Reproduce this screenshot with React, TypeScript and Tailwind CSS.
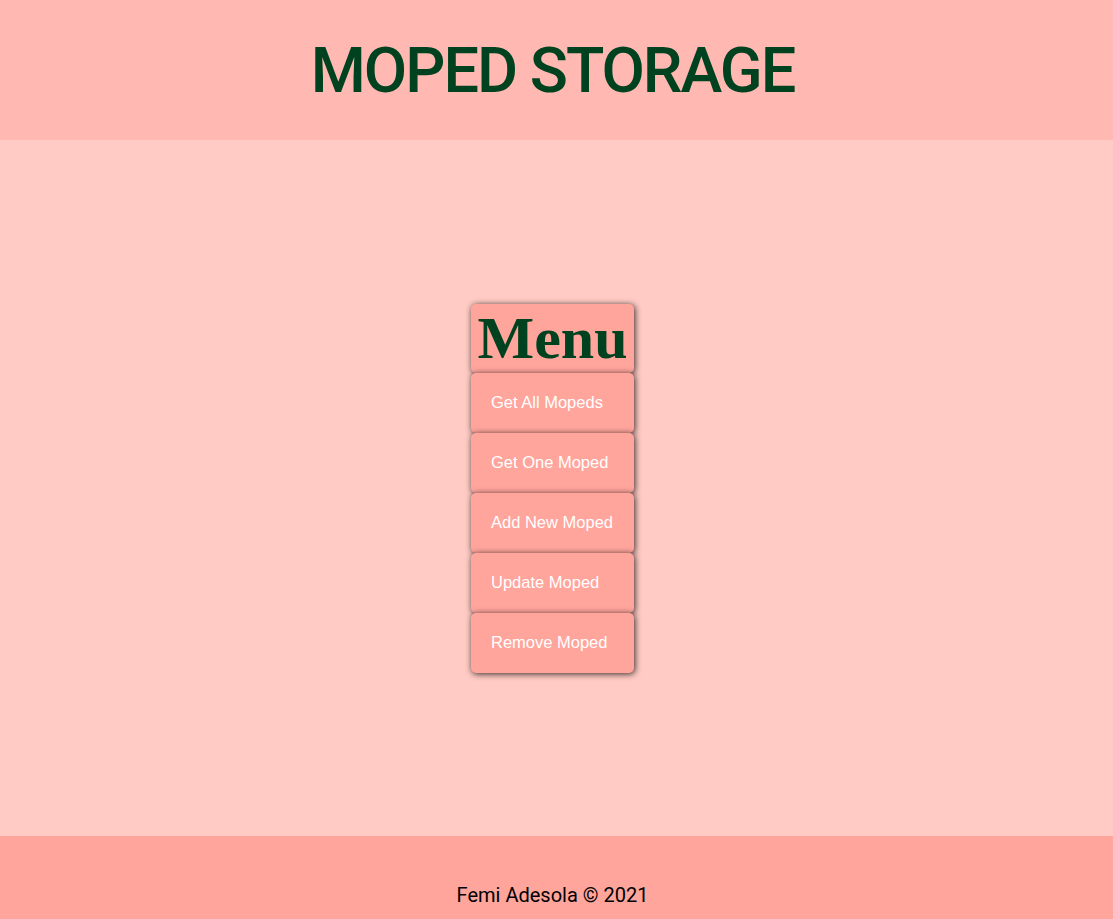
import React from 'react';

const menuItems = ['Get All Mopeds', 'Get One Moped', 'Add New Moped', 'Update Moped', 'Remove Moped'];

const App: React.FC = () => {
  return (
    <div className="flex min-h-[919px] w-full flex-col font-['Roboto',sans-serif]">
      <header className="flex h-[140px] items-center justify-center bg-[#ffb9b2] pr-2">
        <h1 className="text-[63px] leading-none font-medium tracking-[-2px] text-[#00421f]">MOPED STORAGE</h1>
      </header>

      <main className="flex h-[696px] items-center justify-center bg-[#ffcbc4] pr-2">
        <nav className="flex w-[163px] flex-col">
          <div className="flex h-[69px] items-center justify-center rounded-[5px] bg-[#ffa59c] shadow-[1px_1px_6px_rgba(0,0,0,0.8)]">
            <h2 className="font-['Liberation_Serif',serif] text-[60px] leading-none font-bold text-[#00421f]">Menu</h2>
          </div>
          {menuItems.map((item) => (
            <button
              key={item}
              type="button"
              className="flex h-[60px] items-center rounded-[5px] bg-[#ffa59c] pl-5 text-left font-['Liberation_Sans',sans-serif] text-[16.5px] text-white shadow-[1px_1px_6px_rgba(0,0,0,0.8)]"
            >
              {item}
            </button>
          ))}
        </nav>
      </main>

      <footer className="flex h-[83px] items-end justify-center bg-[#ffa59c] pr-2 pb-[9px]">
        <p className="text-[20px] text-black">Femi Adesola © 2021</p>
      </footer>
    </div>
  );
};

export default App;
